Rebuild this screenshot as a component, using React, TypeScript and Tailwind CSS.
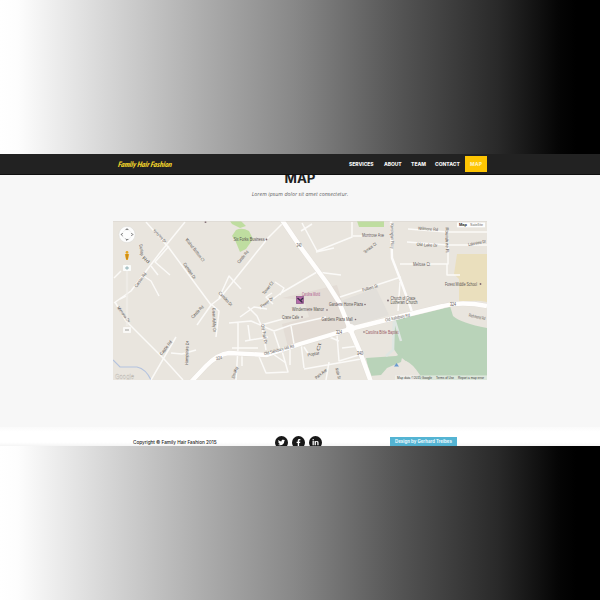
import React from "react";
import { FaTwitter, FaFacebookF, FaLinkedinIn } from "react-icons/fa";

const BAND =
  "bg-[linear-gradient(90deg,#ffffff_0%,#fdfdfd_3%,#d8d8d8_17%,#acacac_34%,#888888_49%,#565656_66%,#292929_83%,#050505_93%,#000000_96%)]";

// x, y (centre), width, rotation, text
type Label = [number, number, number, number, string, string?];

const labels: Label[] = [
  [159.5, 236, 17, 46, "Yorkshire Dr"],
  [195, 250, 28, 52, "Walnut Bottom Ct"],
  [189.5, 271, 19, 55, "Camden Dr"],
  [141.5, 250, 11, 82, "Dunlap"],
  [146, 260, 8, 42, "Rd"],
  [140.5, 280, 17, -54, "Carson Rd"],
  [225.5, 299, 18, 47, "Camden Dr"],
  [197.5, 312, 16, -46, "Castle Rd"],
  [214, 320, 24, 88, "Green Ashby Dr"],
  [123.5, 314.5, 19, 53, "Mimosa Dr"],
  [166, 348, 17, -52, "Castle Rd"],
  [187, 353, 24, -88, "Hampshire Dr"],
  [243, 257, 15, -50, "Castle Rd"],
  [268, 288, 15, -52, "Tower Ct"],
  [267, 302.5, 15, -37, "Power Dr"],
  [264, 334, 20, 80, "Old Trail Dr"],
  [235, 372.5, 12, -72, "Elm Way"],
  [279, 350, 31, -15, "Old Salisbury Hill Rd"],
  [313.5, 354, 12, -10, "Poplar"],
  [319, 347, 8, -75, "Ct"],
  [321, 374, 14, -39, "Park Ave"],
  [338, 373.5, 11, 75, "Main St"],
  [373, 235.5, 22, 0, "Montrose Ave"],
  [370, 248, 15, -38, "Terrace Ct"],
  [392, 236, 25, 89, "Kensington Pkwy"],
  [428, 229, 20, 4, "Wilmore Rd"],
  [427, 245, 21, 4, "Old Lake Dr"],
  [447, 240, 25, 89, "Roundtree Pl"],
  [477, 243, 18, -11, "Lakeview Dr"],
  [421.5, 264.5, 17, 0, "Melrose Ct"],
  [370, 288, 16, -16, "Fulbert St"],
  [397.5, 317.5, 25, -12, "Old Salisbury Rd"],
  [477, 317, 17, 12, "Richmond Rd"],
  [299, 245.5, 5, 0, "340"],
  [219, 358, 6, -10, "324"],
  [339, 333, 6, 0, "324"],
  [453, 305, 6, 0, "324"],
  [360, 354, 6, 0, "340"],
  [249, 240, 31, 0, "Six Forks Business"],
  [311, 295, 18, 0, "Carolina World", "#ad568b"],
  [308, 310, 32, 0, "Windermere Manor"],
  [346, 304.5, 34, 0, "Gardens Home Plaza"],
  [290.5, 317.5, 17, 0, "Crane Cafe"],
  [337, 320, 31, 0, "Gardens Plaza Mall"],
  [382, 333, 33, 0, "Carolina Bible Baptist", "#985963"],
  [403, 298.2, 25, 0, "Church of Grace"],
  [404, 302.4, 27, 0, "Lutheran Church"],
  [461, 284.5, 32, 0, "Forest Middle School"],
];

const minorRoads = [
  "M185 222L159 254 131 291 114 303M146 222L169 248 211 305 220 298 268 238 285 221",
  "M169 246L155 262 170 275M142 275L151 281 159 296M151 266L158 275M115 302L126 321 164 359 183 380",
  "M211 305L197 325M211 304L219 311 216 337M219 298L229 276 241 289M196 350L182 354 171 353M176 337L151 380M120 299L126 296M114 278L121 271",
  "M229 323L251 321 274 331 291 325 326 317M238 323V348L236 380M240 317L254 307 267 309M248 307L257 316 261 325 283 319",
  "M260 309L281 293 317 272 341 275M272 293L266 297 273 304M280 295L284 288 275 282",
  "M302 223L317 251 352 237V222M312 224L301 231M316 252L334 248M353 236H382M391 221L392 258 402 284 410 306 413 315",
  "M340 297L401 277M400 264H448V238M447 264V275H460M408 229L447 232H487M407 242L447 245H487M400 282L398 311",
  "M262 327L266 350M274 332L281 353M291 326L294 344M248 325L250 340M232 348L258 348M245 341L268 337M242 355L242 366M258 354L266 373 288 372 282 351",
  "M273 354L286 363M290 347L290 365M301 343L304 368M304 347L309 355M337 335L339 361 362 354M304 369L361 359M329 362L326 380M327 336L339 341M342 348L359 346",
];

const majorNS = "M282 220L299 245 327 283 339 302 350 329 360 352 371 382";
const majorEW =
  "M191 382L206 366Q218 354 229 353L267 355Q282 350 300 344L350 329 402 316 443 306Q461 301 487 306";

function StreetMap() {
  return (
    <svg viewBox="113 221 374 159" className="block h-[159px] w-[374px]" fontFamily="'Liberation Sans', sans-serif">
      <rect x="113" y="221" width="374" height="159" fill="#e9e5de" />
      <path d="M282 298L337 285 350 328 288 347 282 324 309 317 304 300Z" fill="#e3dcd5" />
      <path d="M338 302L376 288 389 315 350 327Z" fill="#e2dfda" />
      <path d="M457 254H487V302Q473 299 459 303V279L454 274Z" fill="#eadfbd" />
      <path d="M394 320L450 306 453 316Q461 323 487 328V380H420L407 362 398 355 393 348Z" fill="#b9d3b9" />
      <path d="M366 358L396 356 403 353 401 362 387 368 381 375 370 376Z" fill="#b9d3b9" />
      <path d="M388 377L406 361Q412 363 420 375L415 378Z" fill="#e9e5de" />
      <path d="M394 318L393 350 386 356M394 318L401 341" fill="none" stroke="#dfe6e2" strokeWidth="2.5" />
      <path d="M236 230Q242 227 249 231L253 239 246 249 240 252 235 240 232 236Z" fill="#bfdda0" />
      <path d="M230 221H241L246 226 240 228 232 224Z M357 221H384V227H359Z" fill="#bfdda0" />
      <path d="M113 360L120 367H137Q146 369 151 380" fill="none" stroke="#b4c3df" strokeWidth="1.2" />
      <g fill="none" strokeLinejoin="round">
        {minorRoads.map((d) => (
          <path key={d} d={d} stroke="#fbfaf8" strokeWidth="1.5" />
        ))}
        <path d="M391 221L392 258 402 284 410 306 413 315" stroke="#fdfcfb" strokeWidth="2.4" />
        <path d={majorNS} stroke="#e0dbd4" strokeWidth="5.2" />
        <path d={majorEW} stroke="#e0dbd4" strokeWidth="5" />
        <path d={majorNS} stroke="#fffefd" strokeWidth="4.6" />
        <path d={majorEW} stroke="#fffefd" strokeWidth="4.4" />
      </g>
      <circle cx="350.5" cy="328.5" r="4.5" fill="#fffefd" />
      <g fontSize="4.5">
        {labels.map(([x, y, width, angle, value, color = "#57524f"], i) => (
          <text
            key={i}
            x={x}
            y={y + 1.4}
            textAnchor="middle"
            textLength={width}
            lengthAdjust="spacingAndGlyphs"
            transform={`rotate(${angle} ${x} ${y})`}
            fill={color}
          >
            {value}
          </text>
        ))}
      </g>
      <g fill="#7e6971">
        <circle cx="266.5" cy="239.5" r=".9" />
        <circle cx="327" cy="310" r=".8" />
        <circle cx="365" cy="304.5" r=".8" />
        <circle cx="302" cy="317" r=".8" />
        <circle cx="355.5" cy="319.5" r=".8" />
        <circle cx="364" cy="332" r=".8" />
        <circle cx="388" cy="300.5" r=".9" />
        <circle cx="480.5" cy="284" r=".9" />
        <circle cx="205.5" cy="222" r="1" />
      </g>
      <rect x="296.5" y="296.5" width="7" height="7" fill="#b66aa9" stroke="#875285" strokeWidth=".7" />
      <path d="M297.5 298L302.5 302.5M300.5 300.5L303 298" stroke="#392f48" strokeWidth="1.4" />
      <path d="M396.5 363L399 366.5H394Z" fill="#699ad0" />
      <circle cx="127" cy="234.5" r="8.2" fill="#fdfdfd" stroke="#d7d6d3" strokeWidth=".5" />
      <circle cx="127" cy="234.5" r="4.6" fill="none" stroke="#e8e8e8" strokeWidth=".6" />
      <path d="M125.7 230L127 228.7 128.3 230M125.7 239L127 240.3 128.3 239M122.5 233.2L121.2 234.5 122.5 235.8M131.5 233.2L132.8 234.5 131.5 235.8" fill="none" stroke="#555" />
      <circle cx="127" cy="252.4" r="1.4" fill="#e7a721" />
      <path d="M124.8 254H129.2L128.6 257 127.8 260H126.2L125.4 257Z" fill="#eba51b" />
      <path d="M127 254V259" stroke="#94651e" strokeWidth=".7" />
      <rect x="123" y="265" width="8" height="6" rx=".7" fill="#fbfdfc" />
      <path d="M125 268H129M127 266.2V269.8" stroke="#7fa2a8" strokeWidth=".8" />
      <rect x="125.8" y="271" width="2.4" height="55" fill="#f1efeb" opacity=".6" />
      <rect x="123" y="327" width="8" height="6" rx=".7" fill="#f9f8f6" />
      <path d="M125 330H129" stroke="#8b8985" strokeWidth=".8" />
      <rect x="457" y="222.5" width="28" height="4.8" fill="#fefefe" />
      <text x="459" y="226.3" fontSize="4" fontWeight="700" fill="#222">Map</text>
      <text x="470" y="226.3" fontSize="4" textLength="13" lengthAdjust="spacingAndGlyphs" fill="#666">Satellite</text>
      <rect x="395" y="375.4" width="92" height="4.6" fill="#f4f4f1" opacity=".6" />
      <g fontSize="3.8" fill="#383c37">
        <text x="397" y="379" textLength="35" lengthAdjust="spacingAndGlyphs">Map data ©2015 Google</text>
        <text x="436" y="379" textLength="18" lengthAdjust="spacingAndGlyphs">Terms of Use</text>
        <text x="458" y="379" textLength="26" lengthAdjust="spacingAndGlyphs">Report a map error</text>
      </g>
      <text x="115" y="378.5" fontSize="6.5" textLength="19" lengthAdjust="spacingAndGlyphs" fill="#f7f6f3" stroke="#bdb8b1" strokeWidth=".3">Google</text>
      <path d="M113 221.5H487" stroke="#d8d5d0" strokeWidth="1" opacity=".5" />
    </svg>
  );
}

function NavItem({ width, space, children }: { width: string; space: string; children: string }) {
  return (
    <a className={`${width} ${space} block whitespace-nowrap`}>
      {children}
    </a>
  );
}

export default function App() {
  return (
    <div className="flex h-[600px] w-[600px] flex-col overflow-hidden bg-[#f7f7f7] font-['Inter',sans-serif]">
      <div className={`h-[154px] shrink-0 ${BAND}`} />
      <header className="z-10 flex h-[21px] shrink-0 items-center border-b border-[#0f0f0f] bg-[#222] pl-[116px]">
        <svg className="h-[14px] w-[60px] shrink-0" viewBox="0 0 60 14" aria-label="Family Hair Fashion">
          <text x="3.5" y="10.5" transform="skewX(-10)" fontFamily="Lato, sans-serif" fontSize="7.6" fontStyle="italic" fontWeight="800" fill="#f2d42b" textLength="54" lengthAdjust="spacingAndGlyphs">Family Hair Fashion</text>
        </svg>
        <nav className="ml-[173px] flex h-full items-center text-[5px] leading-none font-extrabold text-[#f4f4f4]">
          <NavItem width="w-[35px]" space="tracking-[-0.04px]">SERVICES</NavItem>
          <NavItem width="w-[27px]" space="tracking-[-0.1px]">ABOUT</NavItem>
          <NavItem width="w-[24px]" space="tracking-[0px]">TEAM</NavItem>
          <NavItem width="w-[30px]" space="tracking-[-0.04px]">CONTACT</NavItem>
          <a className="flex h-[16px] w-[22px] items-center justify-center bg-[#fec503] text-[#fff1b7]">MAP</a>
        </nav>
      </header>
      <section className="flex h-[252px] shrink-0 flex-col items-center bg-[#f7f7f7]">
        <h1 className="-mt-[4px] h-[14px] text-[13.3px] leading-[14px] font-bold text-[#202020]">MAP</h1>
        <p className="mt-[5px] h-[8px] font-['Open_Sans',sans-serif] text-[5.3px] leading-[8px] whitespace-nowrap text-[#666] italic">
          <span className="inline-block tracking-[0.06px]">Lorem ipsum dolor sit amet consectetur.</span>
        </p>
        <div className="mt-[23px]">
          <StreetMap />
        </div>
      </section>
      <footer className="flex h-[19px] shrink-0 items-start overflow-hidden bg-[linear-gradient(#fafafa,#fff_25%,#fff_80%,#f5f5f5)] pl-[133px]">
        <p className="mt-[11px] w-[142px] text-[4.7px] leading-[8px] font-medium tracking-[-0.03px] whitespace-nowrap text-[#222]">
          Copyright © Family Hair Fashion 2015
        </p>
        <div className="mt-[9px] flex gap-1 text-[7px] text-white">
          <span className="flex size-[13px] items-center justify-center rounded-full bg-[#181818]"><FaTwitter /></span>
          <span className="flex size-[13px] items-center justify-center rounded-full bg-[#181818]"><FaFacebookF /></span>
          <span className="flex size-[13px] items-center justify-center rounded-full bg-[#181818]"><FaLinkedinIn /></span>
        </div>
        <a className="mt-[10px] ml-[68px] flex h-[11px] w-[67px] items-center justify-center bg-[#54b4d3] text-[4.4px] leading-none font-bold whitespace-nowrap text-[#edfaff]">
          Design by Gerhard Treibes
        </a>
      </footer>
      <div className={`h-[154px] shrink-0 ${BAND}`} />
    </div>
  );
}
